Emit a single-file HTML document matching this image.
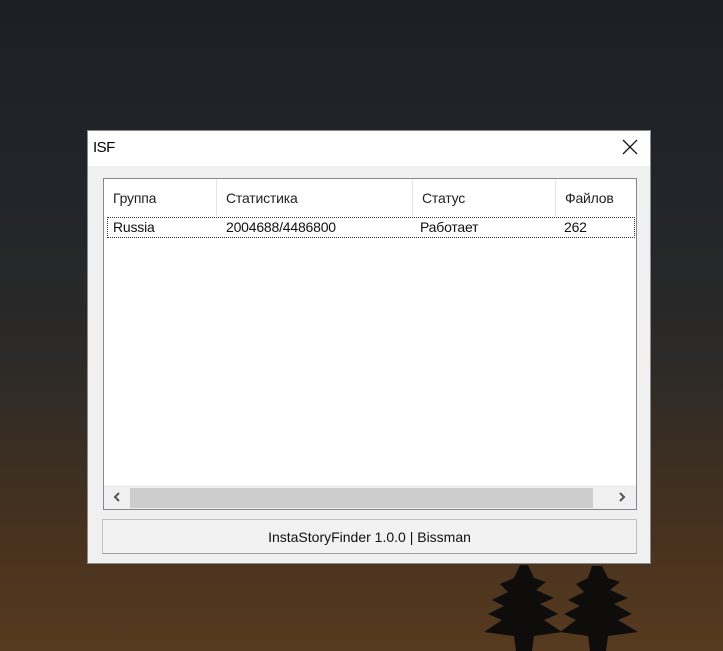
<!DOCTYPE html>
<html><head><style>
body{margin:0;width:723px;height:651px;overflow:hidden;position:relative;font-family:"Liberation Sans","DejaVu Sans",sans-serif;
background:linear-gradient(180deg,#1c2024 0%,#22252a 30%,#2c2a28 55%,#45311f 80%,#573a1f 100%);}
.win{position:absolute;left:87px;top:130px;width:564px;height:434px;background:#f0f0f0;border:1px solid #8a8a8a;box-sizing:border-box}
.title{position:absolute;left:0;top:0;width:100%;height:35px;background:#fff}
.title span{position:absolute;left:5px;top:8px;font-size:15px;color:#000;letter-spacing:-0.5px}
.x{position:absolute;right:12px;top:8px}
.list{position:absolute;left:15px;top:47px;width:534px;height:332px;background:#fff;border:1px solid #828790;box-sizing:border-box}
.hd{position:absolute;top:0;height:37px;font-size:14px;color:#222;line-height:38px;padding-left:9px;box-sizing:border-box;border-right:1px solid #e5e5e5;letter-spacing:-0.2px}
.row{position:absolute;left:3px;top:38px;width:528px;height:21px;border:1px dotted #333;box-sizing:border-box;font-size:14px;line-height:19px;color:#111;letter-spacing:-0.2px}
.row span{position:absolute;top:0}
.sb{position:absolute;left:0;bottom:0;width:532px;height:24px;background:#f0f0f0}
.thumb{position:absolute;left:26px;top:3px;width:463px;height:20px;background:#cdcdcd}
.btn{position:absolute;left:14px;top:388px;width:535px;height:35px;background:#f2f2f2;border:1px solid #c0c0c0;border-bottom-color:#a0a0a0;box-sizing:border-box;text-align:center;line-height:34px;font-size:14px;color:#111}
</style></head><body>
<svg style="position:absolute;left:470px;top:560px" width="180" height="91"><path fill="#0e0d0c" d="M50 5 L58 5 L64 18 L76 22 L66 30 L84 38 L70 44 L88 54 L74 60 L92 72 L64 76 L62 91 L46 91 L44 76 L14 72 L32 60 L18 54 L34 46 L22 40 L38 32 L30 24 L44 18Z M122 6 L132 6 L138 18 L150 22 L140 30 L158 38 L144 44 L162 54 L148 60 L168 72 L138 76 L136 91 L120 91 L118 76 L90 72 L106 60 L94 54 L110 46 L98 40 L114 32 L106 24 L118 18Z"/></svg>
<div class="win">
<div class="title"><span>ISF</span>
<svg class="x" width="16" height="16"><path d="M1 1L15 15M15 1L1 15" stroke="#111" stroke-width="1.3"/></svg></div>
<div class="list">
<div class="hd" style="left:0;width:113px">Группа</div>
<div class="hd" style="left:113px;width:196px">Статистика</div>
<div class="hd" style="left:309px;width:143px">Статус</div>
<div class="hd" style="left:452px;width:80px;border:none">Файлов</div>
<div class="row"><span style="left:5px">Russia</span><span style="left:118px">2004688/4486800</span><span style="left:312px">Работает</span><span style="left:456px">262</span></div>
<div class="sb"><div class="thumb"></div>
<svg style="position:absolute;left:9px;top:7px" width="8" height="10"><path d="M6 1L2 5L6 9" stroke="#555" stroke-width="2" fill="none"/></svg>
<svg style="position:absolute;left:514px;top:7px" width="8" height="10"><path d="M2 1L6 5L2 9" stroke="#555" stroke-width="2" fill="none"/></svg></div>
</div>
<div class="btn">InstaStoryFinder 1.0.0 | Bissman</div>
</div>
</body></html>
